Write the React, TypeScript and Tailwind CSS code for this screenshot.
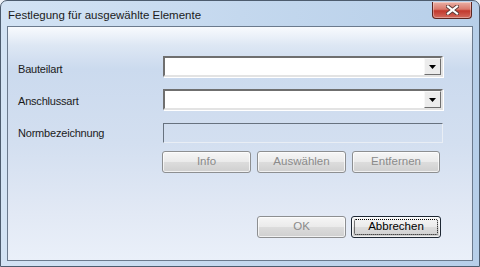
const font = { fontFamily: '"Liberation Sans", Arial, sans-serif' };

function CloseButton() {
  return (
    <div className="mt-px flex h-[17px] w-[40px] items-center justify-center rounded-b-[4px] border border-[#5d2621] border-t-0 bg-[linear-gradient(to_bottom,#eab0a5_0%,#d9796c_45%,#c2382d_55%,#d26b5e_100%)] shadow-[inset_0_0_0_1px_rgba(255,255,255,0.35)]">
      <svg width="13" height="10" viewBox="0 0 13 10">
        <path d="M2 1.5 L11 8.5 M11 1.5 L2 8.5" stroke="#5b3a37" strokeWidth="4" strokeLinecap="square" />
        <path d="M2 1.5 L11 8.5 M11 1.5 L2 8.5" stroke="#ffffff" strokeWidth="2.2" strokeLinecap="square" />
      </svg>
    </div>
  );
}

function Combo() {
  return (
    <div className="flex h-[21px] w-[280px] items-stretch justify-end border-2 border-t-[#6f6f6f] border-l-[#6f6f6f] border-b-[#e3e3e3] border-r-[#e3e3e3] bg-white shadow-[1px_1px_0_#ffffff]">
      <div className="flex w-[17px] items-center justify-center border border-t-[#f8f8f8] border-l-[#f8f8f8] border-b-[#6f6f6f] border-r-[#6f6f6f] bg-[#ececec]">
        <svg width="7" height="4" viewBox="0 0 7 4">
          <path d="M0 0 H7 L3.5 4 Z" fill="#000" />
        </svg>
      </div>
    </div>
  );
}

function Button({ label, focused, width = "w-[89px]" }: { label: string; focused?: boolean; width?: string }) {
  return (
    <div
      className={`relative flex h-[22px] ${width} items-center justify-center rounded-[3px] border text-[11.5px] ${
        focused ? "border-[#1d2733] text-black" : "border-[#8d8f91] text-[#8a8a8a]"
      } bg-[linear-gradient(to_bottom,#f6f6f6_0%,#ebebeb_48%,#dcdcdc_52%,#cfcfcf_100%)] shadow-[inset_0_0_0_1px_rgba(255,255,255,0.7)]`}
      style={font}
    >
      {focused && <div className="absolute inset-[2px] rounded-[2px] border border-dotted border-black" />}
      <span className="relative">{label}</span>
    </div>
  );
}

export default function App() {
  return (
    <div className="h-[267px] w-[480px] overflow-hidden bg-[#eef2f8]" style={font}>
      <div className="flex h-full w-full flex-col rounded-t-[7px] border border-[#4d5c6e] bg-[linear-gradient(to_right,#d3e3f4_0%,#c4d8ee_50%,#b7cfe9_100%)]">
        <div className="flex h-[25px] items-start justify-between pl-[7px] pr-[7px]">
          <span className="mt-[6px] text-[11.5px] text-[#1b1b1b]">Festlegung für ausgewählte Elemente</span>
          <CloseButton />
        </div>
        <div className="mx-[6px] mb-[5px] flex-1 border border-[#6b7a8d] bg-[linear-gradient(to_bottom,#f8fafd_0%,#dde7f4_8%,#cbdaee_18%,#d3dff0_50%,#e2e9f5_80%,#eaf0f9_100%)]">
          <div className="grid grid-cols-[145px_280px] items-start pl-[10px] pt-[29px] text-[11px] leading-[13px] tracking-[-0.2px] text-[#1b1b1b]">
            <span className="mt-[7px]">Bauteilart</span>
            <Combo />
            <span className="mt-[18px]">Anschlussart</span>
            <div className="mt-[12px]">
              <Combo />
            </div>
            <span className="mt-[17px]">Normbezeichnung</span>
            <div className="mt-[13px] h-[20px] w-[280px] border border-t-[#67727f] border-l-[#67727f] border-b-[#e9eef5] border-r-[#e9eef5]" />
          </div>
          <div className="ml-[154px] mt-[8px] flex gap-[6px]">
            <Button label="Info" />
            <Button label="Auswählen" />
            <Button label="Entfernen" width="w-[88px]" />
          </div>
          <div className="ml-[249px] mt-[43px] flex gap-[5px]">
            <Button label="OK" />
            <Button label="Abbrechen" focused width="w-[90px]" />
          </div>
        </div>
      </div>
    </div>
  );
}
